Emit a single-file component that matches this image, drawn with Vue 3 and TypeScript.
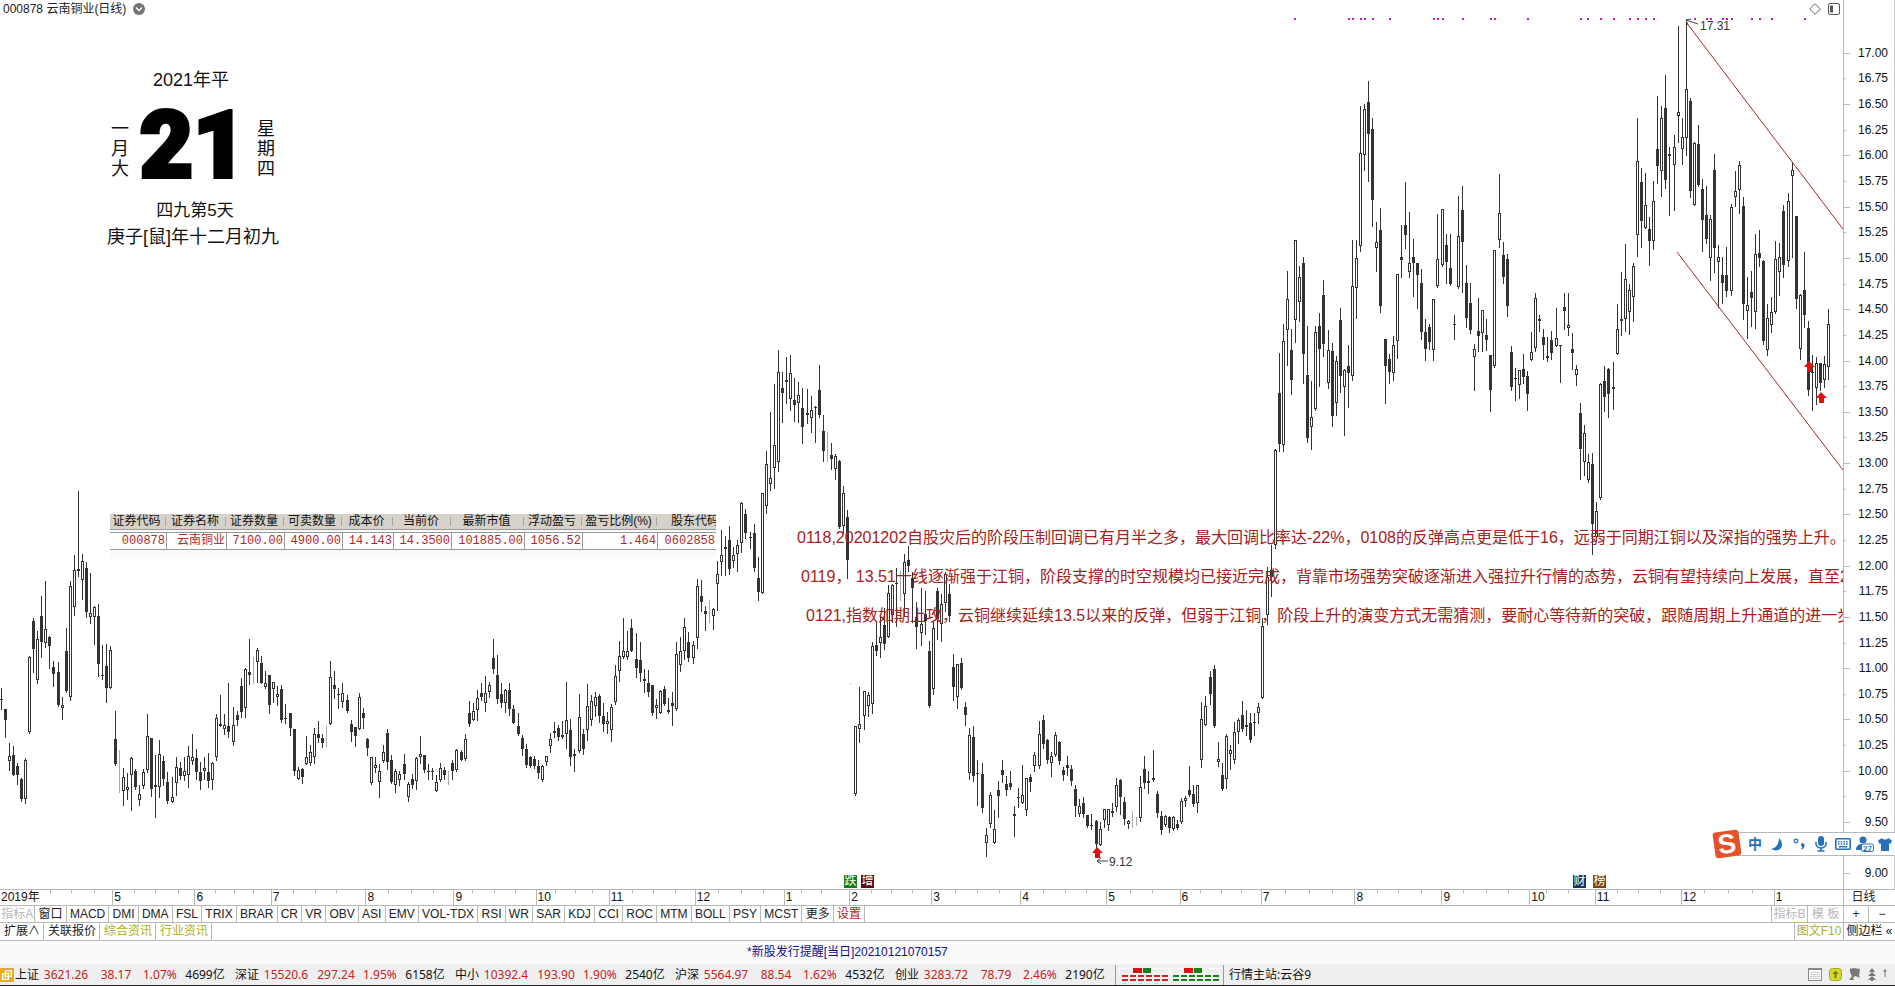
<script setup lang="ts">
type Kind = 'up' | 'down' | 'flat'
interface Bar { x: number; high: number; top: number; bottom: number; low: number; kind: Kind }
interface Run { x: number; y: number; perX: number; perY: number; rows: string }

// Each run lists bars as "x high bodyTop bodyBottom low kind" on its own fine grid.
// Kind: o = rising (hollow), x = falling (solid), g = unchanged (grey).
const runs: Run[] = [
  { x: 0, y: 460, perX: 2.45, perY: 3, rows: `3 685 717 719 748 x,13 748 748 780 830 x,23 850 888 902 930 o,33 858 886 944 946 x,43 908 919 946 971 x,53 955 957 1017 1023 x,62 895 901 1016 1028 o,72 588 590 815 818 o,82 475 484 567 635 x,92 513 538 659 668 o,101 409 469 546 590 x,111 363 508 548 560 o,121 529 531 557 624 x,131 603 621 643 677 x,143 606 637 734 737 x,153 711 736 743 776 o,163 504 573 692 697 x,173 363 379 710 720 o,182 285 331 440 464 o,192 94 328 333 348 x,202 282 304 361 416 o,212 306 325 457 470 x,221 340 460 470 489 o,231 438 440 470 551 o,241 432 469 613 647 x,251 554 645 647 656 x,261 552 619 685 725 x,270 559 571 685 685 o,283 754 838 913 915 x,292 870 901 903 995 g,302 925 952 992 1034 o,312 940 982 989 1018 o,322 892 895 944 1050 o,332 928 932 980 986 x,342 975 1003 1021 1034 o,351 928 937 977 983 o,361 763 829 931 937 o,371 834 835 986 1007 x,381 885 976 980 1070 x,391 841 883 982 1010 o,401 888 904 958 976 x,410 937 965 1023 1028 x,422 952 1011 1025 1026 o,432 892 920 970 1006 o,442 905 925 947 956 x,452 892 932 947 959 o,461 859 889 946 982 o,471 823 892 904 911 o,481 868 895 937 956 x,491 907 935 964 986 x,501 891 925 932 956 o,511 880 937 964 980 x,520 907 910 961 986 o,530 763 773 892 901 o,540 705 793 799 799 x,550 763 796 808 823 o,560 669 799 817 832 x,572 740 796 845 854 o,582 753 766 779 796 x,591 655 679 755 770 x,601 625 627 745 770 o,611 537 637 644 671 x,620 592 646 648 668 g,631 564 571 605 665 o,640 588 610 668 668 x,650 634 669 680 683 o,660 645 646 734 758 x,670 667 667 686 727 o,680 679 703 710 734 o,690 675 686 779 785 x,700 731 774 776 788 x,711 759 760 803 826 x,721 807 808 932 944 x,731 922 931 956 956 o,741 923 926 951 968 x,751 829 892 913 913 o,760 856 876 909 915 o,770 805 823 892 910 o,780 784 823 835 845 x,790 823 835 848 862 x,799 797 855 857 857 g,809 603 652 791 792 o,819 633 675 686 713 x,829 684 703 706 743 x,839 669 700 726 740 o,851 705 720 752 755 x,861 779 791 815 844 x,871 800 801 829 857 x,880 700 710 808 808 o,890 744 759 773 805 x,900 835 837 865 885 x,910 891 892 970 972 o,920 892 916 923 937 o,930 913 932 965 1011 o,939 856 875 902 905 o,949 808 820 907 926 x,959 886 901 965 970 x,969 928 934 975 995 o,979 934 943 961 976 o,991 883 911 941 956 x,1001 965 971 1010 1023 o,1010 941 956 974 983 x,1020 892 895 964 988 o,1030 829 883 892 910 o,1040 886 886 929 937 x,1050 911 933 935 956 x,1060 923 934 937 956 x,1069 946 967 992 994 o,1079 908 925 959 962 o,1089 920 931 946 956 x,1099 933 960 962 971 g,1109 901 908 932 956 x,1118 866 871 931 932 o,1130 871 877 899 899 x,1140 823 838 898 900 o,1150 723 760 791 799 x,1160 730 754 779 780 o,1170 691 715 749 779 o,1180 669 700 710 719 x,1189 648 700 728 752 o,1199 667 675 697 710 o,1209 537 595 627 638 x,1219 584 645 718 730 x,1229 669 703 730 740 x,1238 688 691 730 756 o,1248 669 691 746 764 x,1258 736 748 788 790 x,1270 758 797 823 825 x,1280 826 835 868 884 x,1290 852 868 916 921 x,1299 887 890 919 920 x,1309 889 896 919 923 x,1319 901 919 940 953 x,1328 916 919 961 962 o,1338 889 889 906 916 o,1348 820 838 859 875 o,1358 787 812 817 832 o,1368 796 803 832 840 x,1378 782 826 832 835 x,1388 666 781 823 863 o,1397 776 811 892 914 x,1407 868 883 889 932 o,1419 702 772 873 877 o,1429 808 821 868 881 x,1439 672 739 811 839 o,1449 705 724 781 796 o,1458 697 711 737 768 o,1468 703 708 767 785 x,1478 730 767 791 814 x,1488 756 783 793 820 o,1498 732 742 809 844 o,1508 616 649 727 733 o,1517 544 589 632 662 o,1527 475 573 592 593 o,1537 513 573 592 596 o` },
  { x: 630, y: 330, perX: 2.45, perY: 2.9037, rows: `3 840 866 933 933 x,15 880 955 982 1009 x,25 907 958 995 1018 x,35 984 1014 1020 1050 o,45 988 1026 1050 1062 x,55 1031 1032 1112 1118 x,65 1071 1089 1099 1126 o,74 1046 1047 1113 1113 o,84 1035 1041 1085 1089 x,94 1068 1103 1110 1112 o,104 1052 1084 1091 1148 x,114 907 942 1101 1102 o,123 891 931 972 991 o,133 837 863 931 956 o,143 878 907 952 960 x,155 903 916 951 968 o,165 724 744 895 924 o,175 727 771 789 817 x,185 800 816 824 872 x,195 785 822 824 847 g,204 808 811 831 869 o,214 672 709 738 812 o,224 582 652 674 710 o,234 597 630 636 710 o,243 570 609 693 708 x,253 630 652 670 687 o,263 609 623 651 701 o,273 498 503 619 645 o,283 521 534 588 605 x,295 587 600 605 634 x,305 563 588 690 699 x,315 659 720 760 785 x,324 474 474 763 763 o,334 352 390 511 530 o,344 239 430 446 466 o,354 157 334 400 458 o,364 59 123 384 408 o,373 122 167 184 266 x,383 79 146 150 211 x,393 72 125 199 233 o,403 139 203 217 263 x,413 152 190 211 266 o,422 168 226 281 329 x,434 170 240 246 271 x,444 192 231 255 296 o,454 222 223 225 325 x,464 103 175 247 253 x,474 247 293 350 380 x,484 297 351 353 380 g,494 329 363 376 403 x,503 361 366 405 433 o,513 378 381 571 574 x,523 454 474 570 588 o,533 523 542 667 719 x,541 1025 1025 1026 1026 g,552 1150 1151 1348 1350 o,562 1037 1145 1159 1195 o,574 1048 1049 1120 1159 o,584 1050 1059 1093 1120 o,594 907 919 1085 1112 o,604 849 915 932 945 x,614 833 890 910 949 o,623 808 858 911 927 x,633 741 765 890 891 o,643 738 741 828 847 o,653 690 734 737 860 x,663 700 741 743 783 g,672 649 675 768 828 o,682 627 668 684 701 x,692 703 720 749 847 x,702 790 832 862 922 x,713 750 853 881 914 o,724 757 826 846 884 x,733 903 932 1093 1095 x,743 847 865 1042 1057 o,753 749 757 838 897 x,763 766 795 853 903 o,772 704 708 792 815 o,782 738 768 830 844 x,792 941 979 1037 1074 x,802 970 971 1067 1097 o,812 952 967 1039 1041 x,822 1080 1095 1117 1147 x,832 1157 1175 1285 1303 o,842 1150 1182 1294 1309 x,851 1249 1287 1290 1378 x,863 1258 1290 1388 1401 x,873 1447 1467 1490 1526 o,883 1342 1351 1434 1443 o,893 1393 1450 1489 1489 o,902 1311 1336 1352 1413 x,912 1249 1278 1292 1312 x,922 1294 1318 1336 1351 x,932 1281 1315 1326 1333 x,942 1383 1406 1412 1468 o,951 1330 1357 1360 1386 x,961 1263 1351 1372 1374 o,971 1301 1301 1393 1407 o,981 1290 1299 1313 1340 x,991 1226 1235 1265 1281 o,1003 1135 1172 1265 1271 o,1013 1118 1131 1201 1213 x,1022 1188 1190 1248 1257 x,1032 1226 1236 1256 1295 o,1042 1168 1177 1233 1237 o,1052 1193 1195 1252 1260 x,1062 1268 1278 1291 1308 x,1072 1238 1263 1273 1291 x,1081 1263 1275 1309 1320 x,1091 1321 1333 1382 1411 x,1101 1363 1382 1404 1410 o,1111 1357 1373 1406 1413 x,1121 1407 1408 1439 1443 x,1131 1406 1437 1440 1448 x,1143 1422 1426 1492 1508 x,1152 1430 1450 1494 1495 o,1162 1391 1391 1424 1443 o,1172 1391 1392 1437 1451 o,1182 1374 1397 1403 1410 x,1192 1301 1322 1384 1397 o,1202 1303 1307 1355 1404 x,1212 1357 1371 1419 1435 x,1221 1423 1425 1435 1447 o,1231 1396 1431 1433 1443 g,1241 1414 1426 1427 1437 g,1250 1294 1327 1416 1427 o,1260 1237 1275 1315 1331 x,1270 1281 1311 1315 1345 x,1282 1220 1302 1307 1310 x,1292 1340 1347 1402 1414 x,1302 1398 1412 1451 1463 x,1312 1408 1410 1438 1440 o,1322 1412 1415 1446 1459 x,1331 1410 1413 1448 1453 o,1341 1422 1434 1446 1449 x,1351 1360 1369 1430 1432 o,1361 1354 1360 1367 1383 o,1371 1267 1336 1350 1352 x,1381 1322 1347 1376 1381 x,1390 1321 1322 1374 1401 o,1400 1079 1129 1248 1268 o,1410 1062 1093 1146 1147 o,1422 991 1008 1056 1087 x,1432 973 985 1150 1152 x,1441 1196 1247 1255 1265 o,1451 1257 1292 1332 1335 x,1461 1172 1179 1305 1330 o,1471 1206 1220 1232 1276 o,1481 1137 1168 1249 1256 o,1491 1127 1131 1166 1198 o,1501 1077 1117 1160 1165 x,1510 1104 1147 1153 1177 x,1520 1113 1140 1190 1197 x,1530 1112 1139 1142 1176 x,1540 1083 1095 1113 1142 o,1549 835 860 1069 1070 o` },
  { x: 1265, y: 0, perX: 2.489, perY: 3, rows: `5 1702 1732 1846 1873 o,16 1635 1710 1730 1787 x,25 1348 1349 1634 1645 o,36 1060 1180 1333 1352 x,46 973 1024 1336 1352 o,56 814 898 989 1094 o,66 988 1051 1141 1181 x,76 721 721 959 1025 o,86 798 832 907 962 o,96 771 790 1063 1148 x,106 979 1126 1315 1325 x,115 1142 1252 1280 1346 o,125 979 997 1228 1229 o,135 940 979 1048 1157 x,145 841 886 1031 1067 x,158 990 1051 1148 1165 o,168 1030 1054 1247 1277 x,178 1068 1084 1210 1244 o,188 925 961 1127 1175 x,198 1106 1111 1162 1304 o,208 1036 1099 1118 1220 x,218 720 859 1127 1139 o,227 721 775 865 953 o,237 318 460 739 752 o,247 312 328 464 509 o,257 243 307 403 543 x,267 354 388 601 678 x,277 667 727 743 812 o,287 625 690 917 936 x,300 1018 1018 1097 1208 x,310 1063 1078 1117 1150 x,320 1009 1036 1120 1140 o,330 823 823 1024 1074 o,339 675 772 780 830 x,349 546 676 706 743 x,359 637 790 815 831 o,369 717 772 788 887 x,379 790 790 824 923 x,389 806 850 995 1017 x,399 958 997 1046 1079 x,409 973 982 1025 1046 x,419 898 898 1049 1079 o,429 643 778 859 860 o,442 628 628 794 797 o,451 702 736 785 848 x,461 702 805 851 854 x,471 945 972 974 1018 x,481 588 709 862 863 o,491 559 630 725 875 x,501 796 850 953 981 x,511 850 909 989 998 x,521 1033 1048 1070 1169 o,531 895 994 1009 1052 x,541 931 931 1000 1052 o,551 957 1006 1019 1050 x,561 1065 1066 1169 1232 x,571 750 751 1097 1100 o,583 522 640 721 741 o,593 726 766 830 849 x,603 762 778 917 947 x,613 1038 1056 1160 1169 x,623 1104 1135 1138 1200 x,633 1110 1111 1154 1194 o,643 1062 1108 1130 1150 x,653 1113 1129 1181 1229 x,663 995 1057 1081 1081 o,673 880 895 1043 1052 o,683 946 958 962 994 x,693 987 1012 1036 1077 x,703 1010 1069 1073 1082 x,713 994 1021 1060 1077 x,725 924 1015 1037 1038 o,735 1034 1034 1036 1145 x,745 879 922 932 988 x,755 879 976 983 1004 o,765 1000 1048 1060 1107 x,775 1095 1108 1126 1155 o,785 1209 1240 1348 1437 x,795 1276 1300 1385 1425 o,805 1363 1385 1441 1446 o,815 1359 1392 1573 1662 x,825 1507 1534 1610 1612 o,835 1150 1151 1495 1497 o,845 1098 1144 1190 1232 x,855 1103 1108 1182 1251 x,867 1086 1162 1168 1226 o,877 911 988 1063 1063 o,887 816 958 964 1004 x,897 732 838 958 993 o,907 853 871 937 1002 o,917 789 799 892 963 o,927 354 484 706 768 o,937 505 547 664 741 x,947 519 616 685 685 o,957 651 687 722 795 x,967 544 604 724 747 o,977 288 448 499 548 x,987 319 355 514 588 o,997 226 325 541 563 x,1007 440 463 469 645 x,1019 406 442 496 630 o,1029 79 337 349 427 o,1039 354 412 446 492 o,1049 66 268 415 465 o,1059 294 304 574 591 x,1069 427 430 616 616 o,1079 375 433 554 559 x,1089 536 568 661 752 x,1099 559 646 716 728 x,1109 645 658 773 840 o,1119 462 511 745 815 x,1129 735 772 787 920 o,1139 771 826 848 910 x,1149 742 826 874 888 x,1161 613 622 872 884 o,1171 514 574 592 618 o,1181 484 495 571 638 o,1191 591 619 913 956 x,1201 831 916 932 1014 o,1211 814 877 895 978 x,1221 702 763 935 984 o,1231 690 760 775 797 x,1241 780 782 1022 1032 x,1250 911 955 1049 1065 o,1260 892 935 976 996 o,1270 724 778 937 938 o,1280 729 772 817 884 o,1290 615 633 794 831 x,1303 580 603 782 797 o,1313 487 511 527 771 o,1323 648 649 898 924 x,1333 881 886 1048 1077 o,1343 756 871 944 981 x,1352 962 985 1171 1185 x,1362 1066 1115 1118 1229 x,1372 1071 1090 1165 1212 o,1383 1089 1090 1150 1170 x,1393 1068 1093 1141 1160 o,1403 927 973 1100 1137 o` },
]

const kinds: Record<string, Kind> = { o: 'up', x: 'down', g: 'flat' }
const bars: Bar[] = runs.flatMap((run) =>
  run.rows.split(',').map((row) => {
    const [x, high, top, bottom, low, kind] = row.split(' ')
    const y = (v: string) => Math.round(run.y + Number(v) / run.perY)
    return { x: Math.floor(run.x + Number(x) / run.perX), high: y(high), top: y(top), bottom: y(bottom), low: y(low), kind: kinds[kind] }
  }),
)
const wicks = (flat: boolean) =>
  bars.filter((b) => (b.kind === 'flat') === flat).map((b) => `M${b.x} ${b.high}h1V${b.low + 1}h-1z`).join('')
const solidBodies = bars.filter((b) => b.kind === 'down').map((b) => `M${b.x - 1} ${b.top}h3V${Math.max(b.bottom, b.top + 1)}h-3z`).join('')
const hollowBodies = bars.filter((b) => b.kind === 'up')

const signalDots = [1294, 1348, 1352, 1360, 1364, 1372, 1389, 1433, 1437, 1442, 1462, 1490, 1494, 1527, 1580, 1587, 1600, 1613, 1629, 1637, 1645, 1653, 1694, 1706, 1710, 1722, 1726, 1731, 1751, 1759, 1771, 1804]
const buyArrows = [[1809, 361], [1821, 392], [1097, 847]]

// 9.25 lies under the input bar, so its label stays empty.
const prices = Array.from({ length: 33 }, (_, i) => (17 - i * 0.25).toFixed(2)).map((p) => (p === '9.25' ? '' : p))

const months = [
  { label: '2019年', span: 114 }, { label: '5', span: 82 }, { label: '6', span: 76 }, { label: '7', span: 95 },
  { label: '8', span: 88 }, { label: '9', span: 82 }, { label: '10', span: 73 }, { label: '11', span: 86 },
  { label: '12', span: 89 }, { label: '1', span: 65 }, { label: '2', span: 82 }, { label: '3', span: 89 },
  { label: '4', span: 86 }, { label: '5', span: 73 }, { label: '6', span: 81 }, { label: '7', span: 94 },
  { label: '8', span: 87 }, { label: '9', span: 88 }, { label: '10', span: 65 }, { label: '11', span: 86 },
  { label: '12', span: 93 }, { label: '1', span: 69 },
]
const weeks = [50, 71, 94, 134, 155, 178, 215, 234, 253, 293, 315, 336, 388, 411, 433, 472, 494, 515, 555, 575, 592, 632, 653, 675, 718, 741, 763, 801, 821, 871, 891, 912, 955, 977, 999, 1043, 1065, 1086, 1130, 1152, 1200, 1221, 1241, 1285, 1309, 1332, 1377, 1398, 1421, 1463, 1486, 1508, 1546, 1568, 1617, 1638, 1660, 1704, 1728, 1752]
const weekPath = weeks.map((x) => `M${x} 0h1v3h-1z`).join('')

const indicators = ['窗口', 'MACD', 'DMI', 'DMA', 'FSL', 'TRIX', 'BRAR', 'CR', 'VR', 'OBV', 'ASI', 'EMV', 'VOL-TDX', 'RSI', 'WR', 'SAR', 'KDJ', 'CCI', 'ROC', 'MTM', 'BOLL', 'PSY', 'MCST', '更多']

const notes = [
  '0118,20201202自股灾后的阶段压制回调已有月半之多，最大回调比率达-22%，0108的反弹高点更是低于16，远弱于同期江铜以及深指的强势上升。',
  '0119， 13.51一线逐渐强于江铜，阶段支撑的时空规模均已接近完成，背靠市场强势突破逐渐进入强拉升行情的态势，云铜有望持续向上发展，直至2',
  '0121,指数如期上攻，云铜继续延续13.5以来的反弹，但弱于江铜，阶段上升的演变方式无需猜测，要耐心等待新的突破，跟随周期上升通道的进一步',
]

const holdings = [
  ['证券代码', '000878'], ['证券名称', '云南铜业'], ['证券数量', '7100.00'], ['可卖数量', '4900.00'], ['成本价', '14.143'],
  ['当前价', '14.3500'], ['最新市值', '101885.00'], ['浮动盈亏', '1056.52'], ['盈亏比例(%)', '1.464'], ['股东代码', '0602858'],
]

const indices = [
  ['上证', '3621.26', '38.17', '1.07%', '4699亿'],
  ['深证', '15520.6', '297.24', '1.95%', '6158亿'],
  ['中小', '10392.4', '193.90', '1.90%', '2540亿'],
  ['沪深', '5564.97', '88.54', '1.62%', '4532亿'],
  ['创业', '3283.72', '78.79', '2.46%', '2190亿'],
]
</script>

<template>
  <main class="terminal">
    <section class="board">
      <div class="chart">
        <svg class="plot" viewBox="0 0 1843 889" preserveAspectRatio="none" aria-label="云南铜业日线">
          <g shape-rendering="crispEdges">
            <path :d="wicks(false)" fill="#333" />
            <path :d="wicks(true)" fill="#aaa" />
            <path :d="solidBodies" fill="#333" />
            <rect v-for="(b, i) in hollowBodies" :key="i" :x="b.x - 0.5" :y="b.top + 0.5" width="2" :height="Math.max(1, b.bottom - b.top - 1)" fill="#fff" stroke="#333" />
            <rect v-for="x in signalDots" :key="x" :x="x" y="18" width="2" height="2" fill="#c01cc0" />
          </g>
          <path d="M1686 22L1843 229M1677 252L1843 470" stroke="#a82828" fill="none" />
          <path d="M1698 24l-12-4m5-1l-5 1 2 5M1108 861h-11m4-3l-4 3 4 3" stroke="#444" fill="none" />
          <path v-for="(a, i) in buyArrows" :key="i" :d="`M${a[0]} ${a[1]}l6 6h-3v5h-5v-5h-3z`" fill="#e01010" />
          <text x="1700" y="30">17.31</text>
          <text x="1109" y="866">9.12</text>
        </svg>

        <header class="symbol">
          <span>000878 云南铜业(日线)</span>
          <button class="plain" aria-label="展开"><svg width="12" height="12" viewBox="0 0 12 12"><circle cx="6" cy="6" r="6" fill="#747474" /><path d="M3 4.5l3 3 3-3" stroke="#fff" stroke-width="1.5" fill="none" /></svg></button>
        </header>
        <div class="corner">
          <button class="plain" aria-label="标记"><svg width="12" height="12" viewBox="0 0 12 12"><path d="M6 .7L11.3 6 6 11.3.7 6z" fill="none" stroke="#666" /></svg></button>
          <button class="plain" aria-label="面板"><svg width="12" height="12" viewBox="0 0 12 12"><rect x=".5" y=".5" width="11" height="11" rx="1.5" fill="#fff" stroke="#555" /><rect x="2" y="2.5" width="3" height="7" fill="#555" /></svg></button>
        </div>

        <aside class="calendar">
          <span class="year">2021年平</span>
          <span class="side">一月大</span>
          <strong class="day">21</strong>
          <span class="side">星期四</span>
          <span class="solar">四九第5天</span>
          <span class="lunar">庚子[鼠]年十二月初九</span>
        </aside>

        <div class="holdings">
          <table>
            <colgroup><col v-for="(h, i) in holdings" :key="h[0]" :class="`c${i}`" /></colgroup>
            <thead><tr><th v-for="h in holdings" :key="h[0]">{{ h[0] }}</th></tr></thead>
            <tbody><tr><td v-for="h in holdings" :key="h[0]">{{ h[1] }}</td></tr></tbody>
          </table>
        </div>

        <div class="notes"><p v-for="n in notes" :key="n">{{ n }}</p></div>

        <div class="tags early"><span class="tag green">跌</span><span class="tag maroon">增</span></div>
        <div class="tags late"><span class="tag navy">财</span><span class="tag brown">榜</span></div>
      </div>
      <ol class="prices"><li v-for="(p, i) in prices" :key="i">{{ p }}</li></ol>

      <div class="ime">
        <span class="ime-logo">S</span>
        <button class="plain zh">中</button>
        <button class="plain" aria-label="月亮"><svg width="14" height="14" viewBox="0 0 14 14"><path d="M9 1c3 3 4 7 2 10-2 3-7 3-10 1 5-1 8-5 8-11z" fill="#2672b8" /></svg></button>
        <button class="plain" aria-label="标点"><svg width="14" height="14" viewBox="0 0 14 14"><circle cx="4" cy="4" r="1.8" fill="none" stroke="#2672b8" stroke-width="1.3" /><path d="M9.500 6.500a2 2 0 0 1 3 2c0 2-1 3-2.500 4l-.8-.8c1-.8 1.200-1.300 1.200-1.900-1.600-.2-2-2.200-.9-3.300z" fill="#2672b8" /></svg></button>
        <button class="plain" aria-label="语音"><svg width="14" height="16" viewBox="0 0 14 16"><rect x="4" y="0" width="6" height="10" rx="3" fill="#2672b8" /><path d="M2 6v1.500a5 4.500 0 0 0 10 0V6M7 12v3M3.500 15h7" fill="none" stroke="#2672b8" stroke-width="1.600" /></svg></button>
        <button class="plain" aria-label="键盘"><svg width="16" height="12" viewBox="0 0 16 12"><rect x=".8" y=".8" width="14.400" height="10.400" rx="1" fill="#fff" stroke="#2672b8" stroke-width="1.600" /><path d="M3 3.800h10M3 6h10" stroke="#2672b8" stroke-width="1.500" stroke-dasharray="1.500 1.200" /><path d="M4 8.700h8" stroke="#2672b8" stroke-width="1.500" /></svg></button>
        <button class="plain" aria-label="账号"><svg width="18" height="16" viewBox="0 0 18 16"><circle cx="7" cy="4" r="3.500" fill="#2672b8" /><path d="M0 14c0-5 3-6 7-6s6 2 7 6z" fill="#2672b8" /><rect x="5.500" y="8" width="12" height="7.500" rx="2" fill="#fff" stroke="#2672b8" /><text class="badge" x="7" y="15">27</text></svg></button>
        <button class="plain" aria-label="皮肤"><svg width="14" height="14" viewBox="0 0 14 14"><path d="M4 1c1 2 5 2 6 0l4 2.500-1.500 3.500-1.500-.5V14H3V6.500L1.500 7 0 3.500z" fill="#2672b8" /></svg></button>
      </div>
    </section>

    <div class="timeline">
      <div class="months">
        <svg class="weeks" viewBox="0 0 1843 4" preserveAspectRatio="none" shape-rendering="crispEdges"><path :d="weekPath" fill="#b4b4b4" /></svg>
        <span v-for="(m, i) in months" :key="i" :style="{ flexGrow: m.span }">{{ m.label }}</span>
      </div>
      <button class="period">日线</button>
    </div>

    <nav class="tabs">
      <div class="group">
        <button class="dim">指标A</button>
        <button v-for="t in indicators" :key="t">{{ t }}</button>
        <button class="red">设置</button>
      </div>
      <span class="spacer"></span>
      <button class="dim w-b">指标B</button>
      <button class="dim w-b">模 板</button>
      <button class="w-sign">+</button>
      <button class="w-sign last">−</button>
    </nav>

    <nav class="tabs info">
      <button>扩展∧</button>
      <button>关联报价</button>
      <button class="olive">综合资讯</button>
      <button class="olive">行业资讯</button>
      <span class="spacer"></span>
      <button class="olive w-f10">图文F10</button>
      <button class="w-side last">侧边栏 «</button>
    </nav>

    <div class="news"><a href="#">*新股发行提醒[当日]20210121070157</a></div>

    <footer class="status">
      <svg class="app-icon" width="14" height="14" viewBox="0 0 14 14"><rect width="14" height="14" rx="1" fill="#e9a91c" /><path d="M5.500 2.500h6v6h-6zM2.500 5.500h6v6h-6z" fill="#f3c65a" stroke="#fff" stroke-width="1.200" /></svg>
      <div v-for="q in indices" :key="q[0]" class="quote">
        <b>{{ q[0] }}</b><span>{{ q[1] }}</span><span>{{ q[2] }}</span><span>{{ q[3] }}</span><b>{{ q[4] }}</b>
      </div>
      <div class="gauges">
        <svg v-for="c in ['#c42828', '#16801a']" :key="c" width="50" height="14" viewBox="0 0 50 14" shape-rendering="crispEdges">
          <rect x=".5" y=".5" width="49" height="5" fill="#efefef" stroke="#fff" />
          <rect x="14" width="9" height="5" fill="#e01010" /><rect x="24" width="8" height="5" fill="#16801a" />
          <path d="M3 8h46M3 12h46" :stroke="c" stroke-width="2" stroke-dasharray="6 2" />
        </svg>
      </div>
      <span class="server">行情主站:云谷9</span>
      <div class="tray">
        <svg width="14" height="13" viewBox="0 0 14 13"><rect x=".5" y=".5" width="13" height="12" fill="#fff" stroke="#888" /><path d="M0 1.500h14" stroke="#888" /><path d="M2 4.500h10M2 6.500h10M2 8.500h10M2 10.500h10" stroke="#ccc" /></svg>
        <svg width="13" height="13" viewBox="0 0 13 13"><rect x=".5" y=".5" width="12" height="12" rx="3" fill="#d5d82e" stroke="#a7aa18" /><path d="M6.500 2.500l3 3.500h-2v4h-2V6h-2z" fill="#77790c" /></svg>
        <svg width="12" height="13" viewBox="0 0 12 13"><path d="M1 0l2 1 1-1 7 1-1 7 1 2-2-1-3-1-2 2 1 2H0l3-4-2-4z" fill="#777" /></svg>
        <svg width="8" height="13" viewBox="0 0 8 13"><path d="M4 0l3 4H1zM4 4l4 4H0zM4 8l4 4H5v1H3v-1H0z" fill="#777" /></svg>
        <svg width="4" height="13" viewBox="0 0 4 13"><path d="M2 1l2 2.500H2.500V9h-1V3.500H0z" fill="#777" /></svg>
      </div>
    </footer>
  </main>
</template>

<style>
html, body { margin: 0; background: #fff; }
</style>

<style scoped>
* { box-sizing: border-box; }
.terminal {
  display: flex; flex-direction: column; min-height: 100vh; overflow: hidden;
  font: 12px/16px "Liberation Sans", "Noto Sans CJK SC", sans-serif; color: #222;
  border-bottom: 1px solid #222;
}
button { font: inherit; color: inherit; cursor: pointer; }
.plain { border: 0; background: none; padding: 0; display: flex; align-items: center; justify-content: center; }
.board { position: relative; flex: 1; display: flex; min-height: 500px; }
.chart { position: relative; flex: 1; overflow: hidden; border-right: 1px solid #b8b8b8; }
.plot { position: absolute; inset: 0; width: 100%; height: 100%; }
.plot text { font-size: 12px; fill: #333; }
.symbol { position: relative; display: flex; align-items: center; gap: 7px; padding: 1px 3px; }
.corner { position: absolute; top: 3px; right: 3px; display: flex; gap: 7px; }

.calendar {
  position: absolute; left: 103px; top: 69px; width: 180px; display: grid; color: #111;
  grid-template: 22px 110px 20px 32px / 34px 1fr 34px; justify-items: center; align-items: center;
  font-size: 18px; line-height: 20px;
}
.year, .solar, .lunar { grid-column: 1 / -1; white-space: nowrap; }
.year { padding-right: 4px; }
.solar { padding-left: 4px; font-size: 17px; }
.side { width: 18px; padding-top: 6px; word-break: break-all; }
.day { font: 900 92px/110px Roboto, "Liberation Sans", sans-serif; -webkit-text-stroke: 4px #000; color: #000; }

.holdings { position: absolute; left: 110px; top: 514px; width: 606px; overflow: hidden; background: #fafafa; padding-bottom: 7px; }
table { border-collapse: separate; border-spacing: 0; table-layout: fixed; width: 606px; white-space: nowrap; }
th { background: #d6d2ca; font-weight: normal; color: #111; height: 16px; padding: 0; line-height: 15px; border-bottom: 1px solid #999; position: relative; }
th:not(:last-child)::after { content: ""; position: absolute; right: 1px; top: 3px; height: 9px; border-right: 1px solid #aaa59c; }
th:nth-child(-n+9) { padding-right: 4px; }
th:last-child { padding-left: 13px; text-align: left; }
tbody::before { content: ""; display: block; height: 2px; }
td { font: 12px/16px "Liberation Mono", "Noto Sans CJK SC", monospace; color: #b02828; text-align: right; padding: 0 1px; border: solid #999; border-width: 1px 1px 1px 0; background: #fff; overflow: hidden; }
td:last-child { border-right: 0; }
.c0 { width: 57px; } .c1 { width: 60px; } .c2, .c3, .c5, .c7, .c9 { width: 58px; }
.c4 { width: 51px; } .c6 { width: 73px; } .c8 { width: 75px; }

.notes { position: absolute; left: 797px; right: 0; top: 526px; display: grid; row-gap: 15px; color: #a82020; font-size: 16px; line-height: 24px; white-space: nowrap; overflow: hidden; }
.notes p { margin: 0; }
.notes p:nth-child(2) { padding-left: 4px; }
.notes p:nth-child(3) { padding-left: 9px; }

.tags { position: absolute; bottom: 1px; display: flex; gap: 4px; }
.early { left: 844px; }
.late { left: 1573px; gap: 7px; }
.tag { width: 13px; height: 13px; color: #fff; line-height: 13px; text-align: center; }
.green { background: #137a17; } .maroon { background: #5e0e12; } .navy { background: #123a5e; } .brown { background: #7a4612; }

.prices { width: 51px; margin: 0; padding: 40px 6px 3px 0; list-style: none; display: flex; flex-direction: column; border-right: 1px solid #ccc; color: #111; }
.prices li { position: relative; flex: 1; display: flex; align-items: center; justify-content: flex-end; }
.prices li::before { content: ""; position: absolute; left: 0; top: 50%; width: 2px; border-top: 1px solid #b8b8b8; }
.prices li:nth-child(odd)::before { width: 6px; }

.ime { position: absolute; right: 0; bottom: 33px; height: 24px; width: 158px; display: flex; align-items: center; background: #fff; border: solid #b8b8b8; border-width: 1px 0; }
.ime .plain { width: 22px; flex: none; }
.ime .plain:last-child { width: 18px; }
.ime .zh { font-size: 14px; font-weight: bold; color: #2672b8; }
.ime-logo { flex: none; width: 26px; height: 26px; margin: 0 4px 0 -23px; border-radius: 3px; background: #e2532a; color: #fff; font: bold 27px/26px "Liberation Sans", sans-serif; text-align: center; transform: rotate(-8deg); }
.badge { font: bold 8px "Liberation Sans", sans-serif; fill: #2672b8; }

.timeline { display: flex; height: 17px; border: solid #b8b8b8; border-width: 1px 0; }
.months { position: relative; flex: 1; display: flex; border-right: 1px solid #b8b8b8; color: #111; }
.months span { flex: 1 1 0; min-width: 0; white-space: nowrap; padding-left: 1px; line-height: 15px; }
.months span + span { border-left: 1px solid #b8b8b8; }
.weeks { position: absolute; left: 0; top: 0; width: 100%; height: 4px; }
.period { width: 51px; border: 0; background: none; padding: 0 12px 0 0; line-height: 15px; text-align: center; }

.tabs { display: flex; height: 17px; border-bottom: 1px solid #b8b8b8; }
.group { display: flex; width: 865px; }
.tabs button { flex: none; border: 0; border-right: 1px solid #b8b8b8; background: none; padding: 0 3px; line-height: 15px; white-space: nowrap; }
.tabs .group button { flex: 1 0 auto; }
.tabs .spacer { flex: 1; border-right: 1px solid #b8b8b8; }
.tabs .dim { color: #b8b8b8; padding: 0 1px; }
.tabs .red { color: #c01818; }
.tabs .olive { color: #adb01c; }
.tabs .w-b { width: 36px; padding: 0; }
.tabs .w-sign { width: 25px; padding: 0; }
.tabs .last { border-right: 0; }
.tabs .w-sign.last { width: 26px; }
.info { height: 18px; }
.tabs.info button { padding: 0 3px 0 4px; line-height: 17px; }
.tabs.info .w-f10 { width: 49px; padding: 0; }
.tabs.info .w-side { width: 51px; padding: 0; color: #111; }

.news { height: 23px; background: #fafafa; padding-left: 747px; line-height: 23px; }
.news a { color: #10108a; text-decoration: none; }

.status { display: flex; align-items: center; height: 21px; background: #efefef; font-family: "Noto Sans", "Noto Sans CJK SC", sans-serif; line-height: 20px; white-space: nowrap; overflow: hidden; color: #111; }
.app-icon { flex: none; margin-right: 1px; }
.quote { flex: none; display: grid; grid-template-columns: 28px 46px 54px 32px 60px; text-align: center; color: #cc2020; }
.quote b { font-weight: normal; color: #111; }
.quote b:first-child { text-align: left; }
.gauges { flex: none; display: flex; align-items: center; gap: 1px; height: 20px; padding: 0 3px; border: solid #999; border-width: 0 1px; }
.server { padding-left: 5px; }
.tray { margin-left: auto; display: flex; align-items: center; gap: 7px; padding-right: 8px; }
</style>
